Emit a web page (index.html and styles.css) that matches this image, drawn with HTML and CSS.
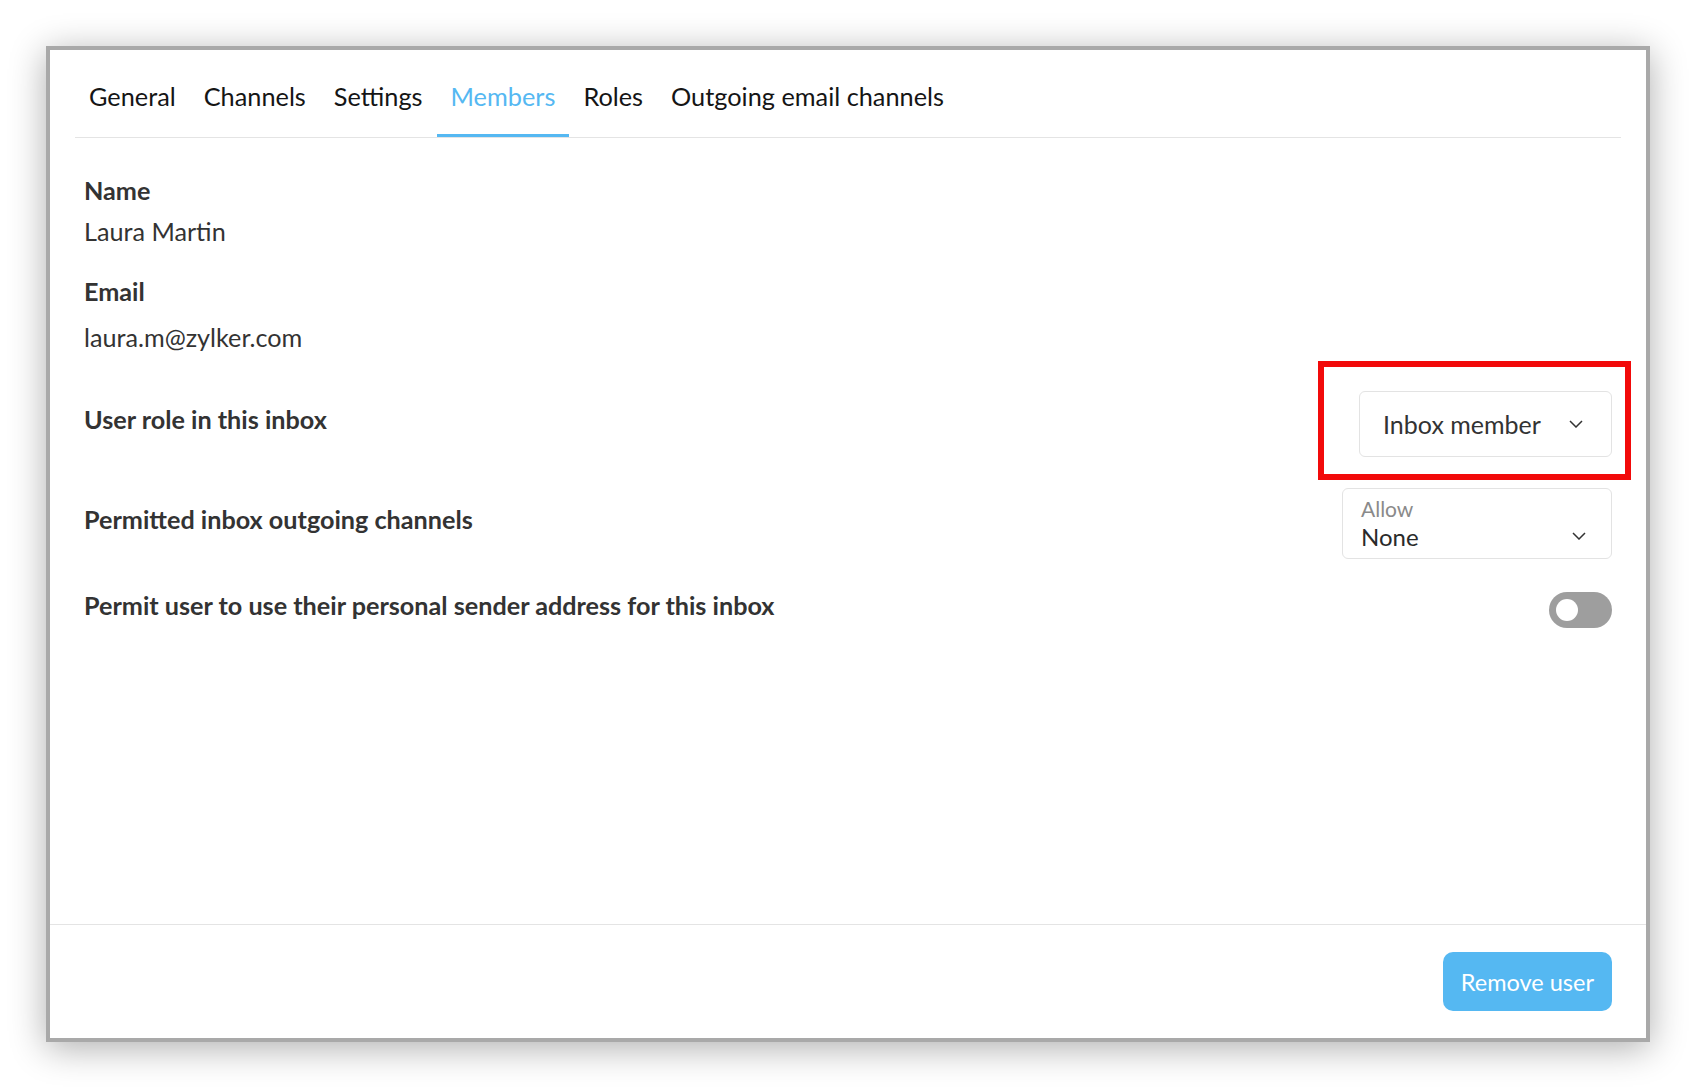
FILE: index.html
```html
<!DOCTYPE html>
<html lang="en">
<head>
<meta charset="utf-8">
<title>Members</title>
<link rel="stylesheet" href="styles.css">
</head>
<body>
<div class="card">
  <nav class="tabs">
    <span class="tab">General</span>
    <span class="tab">Channels</span>
    <span class="tab">Settings</span>
    <span class="tab active">Members</span>
    <span class="tab">Roles</span>
    <span class="tab">Outgoing email channels</span>
  </nav>
  <main class="content">
    <div class="field-label name-label">Name</div>
    <div class="field-value name-value">Laura Martin</div>
    <div class="field-label email-label">Email</div>
    <div class="field-value email-value">laura.m@zylker.com</div>

    <div class="row row-role">
      <div class="row-label">User role in this inbox</div>
      <div class="select-wrap">
        <div class="select select-role">
          <span class="select-text">Inbox member</span>
          <svg class="chevron" width="14" height="8" viewBox="0 0 14 8"><path d="M1 1l6 6 6-6" fill="none" stroke="#333" stroke-width="1.5"/></svg>
        </div>
        <div class="highlight"></div>
      </div>
    </div>

    <div class="row row-channels">
      <div class="row-label">Permitted inbox outgoing channels</div>
      <div class="select select-channels">
        <div class="select-stack">
          <span class="select-caption">Allow</span>
          <span class="select-text">None</span>
        </div>
        <svg class="chevron chevron-low" width="14" height="8" viewBox="0 0 14 8"><path d="M1 1l6 6 6-6" fill="none" stroke="#333" stroke-width="1.5"/></svg>
      </div>
    </div>

    <div class="row row-toggle">
      <div class="row-label">Permit user to use their personal sender address for this inbox</div>
      <div class="toggle"><span class="knob"></span></div>
    </div>
  </main>
  <footer class="footer">
    <button class="btn-primary">Remove user</button>
  </footer>
</div>
</body>
</html>
```

FILE: styles.css
```css
* { box-sizing: border-box; }

html, body {
  margin: 0;
  background: #ffffff;
}

body {
  padding: 46px;
  font-family: "Lato", "Open Sans", sans-serif;
  color: #333333;
}

.card {
  width: 1604px;
  height: 996px;
  background: #ffffff;
  border: 4px solid #a9a9a9;
  box-shadow: 0 6px 34px rgba(0, 0, 0, 0.32);
  display: flex;
  flex-direction: column;
}

.tabs {
  display: flex;
  margin: 0 25px;
  border-bottom: 1px solid #e4e4e4;
}

.tab {
  padding: 31px 14px 23px;
  font-size: 25.3px;
  line-height: 30px;
  color: #151515;
  border-bottom: 3px solid transparent;
  white-space: nowrap;
}

.tab.active {
  color: #55b8f2;
  border-bottom-color: #55b8f2;
}

.content {
  flex: 1;
  padding: 37px 34px 0;
  display: flex;
  flex-direction: column;
}

.field-label {
  font-size: 25.2px;
  line-height: 30px;
  font-weight: 700;
  color: #333;
}

.field-value {
  font-size: 25.2px;
  line-height: 30px;
  color: #333;
}

.name-value { margin-top: 11px; }
.email-label { margin-top: 30px; }
.email-value { margin-top: 16px; }

.row {
  display: flex;
  justify-content: space-between;
  align-items: center;
}

.row-label {
  font-size: 25.2px;
  line-height: 30px;
  font-weight: 700;
  color: #333;
  padding-bottom: 10px;
}

.row-role { margin-top: 39px; }
.row-channels { margin-top: 31px; }
.row-toggle { margin-top: 31px; }

.select-wrap {
  position: relative;
}

.select {
  display: flex;
  align-items: center;
  justify-content: space-between;
  border: 1px solid #e3e3e3;
  border-radius: 6px;
  background: #fff;
}

.select-role {
  width: 253px;
  height: 66px;
  padding: 0 28px 0 23px;
}

.select-role .select-text {
  font-size: 25px;
  color: #333;
}

.select-channels {
  width: 270px;
  height: 71px;
  padding: 0 25px 0 18px;
}

.select-stack {
  display: flex;
  flex-direction: column;
}

.select-caption {
  font-size: 21px;
  line-height: 26px;
  color: #8a8a8a;
}

.select-channels .select-text {
  font-size: 24px;
  line-height: 30px;
  color: #2a2a2a;
}

.chevron { flex: none; }
.chevron-low { margin-top: 24px; }

.highlight {
  position: absolute;
  left: -41px;
  top: -30px;
  width: 313px;
  height: 119px;
  border: 6px solid #f20a0a;
  pointer-events: none;
}

.toggle {
  width: 63px;
  height: 36px;
  border-radius: 18px;
  background: #9e9e9e;
  display: flex;
  align-items: center;
  padding-left: 7px;
}

.knob {
  width: 22px;
  height: 22px;
  border-radius: 50%;
  background: #ffffff;
}

.footer {
  border-top: 1px solid #e4e4e4;
  padding: 27px 34px 27px;
  display: flex;
  justify-content: flex-end;
}

.btn-primary {
  height: 59px;
  padding: 0 18px;
  border: none;
  border-radius: 10px;
  background: #55b8f2;
  color: #ffffff;
  font-family: "Lato", "Open Sans", sans-serif;
  font-size: 23.5px;
}
```
